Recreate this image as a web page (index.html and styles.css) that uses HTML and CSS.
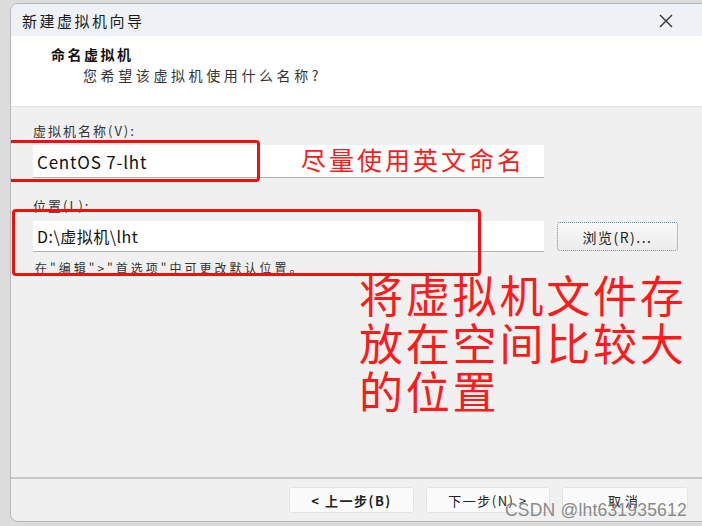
FILE: index.html
```html
<!DOCTYPE html>
<html lang="zh">
<head>
<meta charset="utf-8">
<link rel="stylesheet" href="styles.css">
</head>
<body>
<div class="stage">
  <div class="dialog">
    <div class="titlebar">
      <span class="title">新建虚拟机向导</span>
      <svg class="close" width="14" height="14" viewBox="0 0 14 14"><path d="M1 1L13 13M13 1L1 13" stroke="#333" stroke-width="1.4" fill="none"/></svg>
    </div>
    <div class="header">
      <div class="h-title">命名虚拟机</div>
      <div class="h-sub">您希望该虚拟机使用什么名称?</div>
    </div>
    <div class="body">
      <div class="label l1">虚拟机名称(V):</div>
      <div class="input in1"><span>CentOS 7-lht</span><span class="note1">尽量使用英文命名</span></div>
      <div class="label l2">位置(L):</div>
      <div class="row">
        <div class="input in2"><span>D:\虚拟机\lht</span></div>
        <div class="browse">浏览(R)...</div>
      </div>
      <div class="hint">在"编辑"&gt;"首选项"中可更改默认位置。</div>
      <div class="note2">
        <div class="line">将虚拟机文件存</div>
        <div class="line">放在空间比较大</div>
        <div class="line">的位置</div>
      </div>
      <div class="mark mark1"></div>
      <div class="mark mark2"></div>
    </div>
    <div class="footer">
      <div class="btn b1">&lt; 上一步(B)</div>
      <div class="btn b2">下一步(N) &gt;</div>
      <div class="btn b3">取消</div>
      <div class="wm">CSDN @lht631935612</div>
    </div>
  </div>
</div>
</body>
</html>
```

FILE: styles.css
```css
html, body { margin: 0; padding: 0; }
body {
  width: 702px; height: 526px; overflow: hidden;
  background: #dcdcdc;
  font-family: "Noto Sans CJK SC", "Microsoft YaHei", sans-serif;
  color: #222;
}
.stage { padding: 3px 0 0 10px; height: 526px; box-sizing: border-box; }
.dialog {
  position: relative;
  width: 700px; height: 519px;
  background: #f0f0f0;
  border: 1px solid #b8b8b8;
  border-radius: 8px 8px 0 8px;
  overflow: hidden;
  display: flex; flex-direction: column;
  box-sizing: border-box;
}
.titlebar {
  height: 32px; flex: none;
  background: #eef2f7;
  display: flex; align-items: center;
  padding-left: 11px;
  position: relative;
}
.title { font-size: 15px; color: #1a1a1a; letter-spacing: 2.5px; }
.close { position: absolute; left: 648px; top: 10px; }
.header {
  height: 71px; flex: none;
  background: #ffffff;
  border-bottom: 1px solid #e2e2e2;
  padding-left: 40px;
  box-sizing: border-box;
}
.h-title { font-size: 14px; font-weight: bold; margin-top: 8px; line-height: 20px; color: #111; letter-spacing: 2.5px; }
.h-sub { font-size: 14px; margin-left: 32px; line-height: 20px; margin-top: 1px; color: #333; letter-spacing: 3.6px; }
.body { position: relative; height: 370px; flex: none; padding-left: 22px; }
.label { font-size: 13px; color: #333; line-height: 16px; letter-spacing: 2px; }
.l1 { margin-top: 16px; }
.input {
  width: 511px; height: 33px; box-sizing: border-box;
  background: #fff; border-bottom: 1.5px solid #b0b0b0;
  display: flex; align-items: center; padding-left: 4px;
  font-size: 17px; color: #111; position: relative; letter-spacing: 0.8px;
}
.in1 { margin-top: 6px; }
.note1 { position: absolute; left: 268px; top: -3px; font-size: 25px; line-height: 34px; color: #ff1a1a; letter-spacing: 3px; }
.l2 { margin-top: 20px; }
.row { display: flex; align-items: center; margin-top: 7px; }
.in2 { height: 31px; font-size: 16px; letter-spacing: 0.5px; }
.browse {
  margin-left: 13px; width: 121px; height: 29px; box-sizing: border-box;
  border: 1px dotted #6a8aa8; border-radius: 3px;
  background: linear-gradient(#f8f8f8, #ececec);
  display: flex; align-items: center; justify-content: center;
  font-size: 14px; color: #222; letter-spacing: 1.5px;
}
.hint { font-size: 12px; color: #333; margin-top: 7px; margin-left: 2px; letter-spacing: 3px; }
.note2 {
  position: absolute; left: 348px; top: 163px;
  font-size: 44px; color: #ff1a1a; letter-spacing: 2.8px;
}
.line { height: 48px; line-height: 48px; }
.mark { position: absolute; border: 3px solid #f01010; border-radius: 4px; }
.mark1 { left: -3px; top: 33px; width: 246px; height: 36px; }
.mark2 { left: 1px; top: 102px; width: 463px; height: 61px; }
.footer {
  flex: 1;
  border-top: 2px solid #c8c8c8;
  position: relative;
  display: flex; align-items: flex-start;
  padding-left: 278px; padding-top: 8px;
  gap: 12px;
}
.btn {
  height: 26px; background: #fbfbfb; border: 1px solid #e4e4e4; border-radius: 3px;
  display: flex; align-items: center; justify-content: center;
  font-size: 13px; color: #222; box-sizing: border-box; letter-spacing: 1.5px;
}
.b1 { width: 125px; font-weight: bold; }
.b2 { width: 124px; }
.b3 { width: 126px; letter-spacing: 4px; }
.wm {
  position: absolute; left: 494px; top: 21px;
  font-family: "Liberation Sans", Arial, sans-serif;
  font-size: 17.5px; color: #8a8a8a; letter-spacing: 0.2px;
}
```
